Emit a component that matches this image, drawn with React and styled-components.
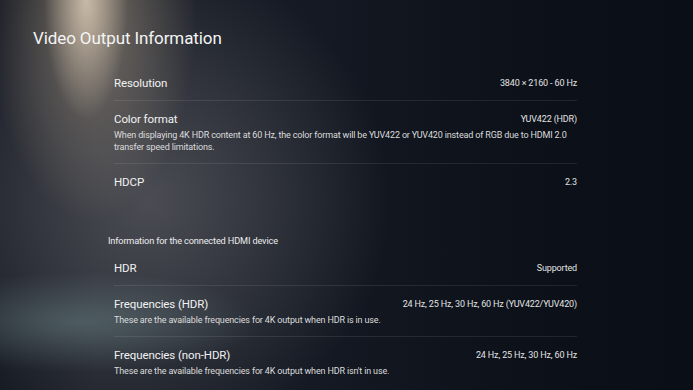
import React from "react";
import styled, { createGlobalStyle } from "styled-components";

const Global = createGlobalStyle`
  html, body {
    margin: 0;
    padding: 0;
    background: #0c111a;
  }
  * { box-sizing: border-box; }
`;

const Screen = styled.div`
  width: 693px;
  height: 390px;
  overflow: hidden;
  font-family: Roboto, "Noto Sans", sans-serif;
  color: #f2f2f2;
  background:
    radial-gradient(ellipse 42px 120px at 86px 0px, rgba(222, 206, 184, 0.8), rgba(222, 206, 184, 0) 100%),
    radial-gradient(ellipse 105px 210px at 92px 10px, rgba(170, 154, 132, 0.6), rgba(170, 154, 132, 0) 100%),
    radial-gradient(ellipse 180px 50px at 80px 322px, rgba(120, 148, 152, 0.42), rgba(120, 148, 152, 0) 100%),
    radial-gradient(ellipse 240px 240px at 150px 200px, rgba(88, 89, 95, 0.78), rgba(88, 89, 95, 0) 100%),
    linear-gradient(90deg, #171b24 0%, #1e222b 14%, #151a24 42%, #0d121b 70%, #0a0e16 100%);
`;

const Title = styled.h1`
  margin: 0;
  padding: 27px 0 0 33px;
  height: 65px;
  font-size: 17px;
  line-height: 22px;
  font-weight: 400;
  letter-spacing: -0.1px;
  color: #f4f4f4;
`;

const List = styled.div`
  margin-left: 114px;
  width: 463px;
`;

const Row = styled.div`
  padding: 10px 0 ${(p) => (p.$tall ? 10 : 9)}px;
  border-bottom: 1px solid ${(p) => (p.$last ? "transparent" : "rgba(255, 255, 255, 0.09)")};
`;

const Head = styled.div`
  display: flex;
  justify-content: space-between;
  align-items: center;
  height: 16px;
`;

const Label = styled.span`
  font-size: 11.5px;
  letter-spacing: -0.1px;
  color: #f2f2f2;
`;

const Value = styled.span`
  font-size: 9px;
  letter-spacing: -0.15px;
  color: #e2e2e2;
`;

const Desc = styled.p`
  margin: 2px 0 0;
  font-size: 9px;
  line-height: 12px;
  letter-spacing: -0.15px;
  color: #dcdcdc;
`;

const SectionTitle = styled.div`
  margin: 35px 0 3px -6px;
  font-size: 9.2px;
  line-height: 12px;
  letter-spacing: -0.15px;
  color: #ececec;
`;

function InfoRow({ label, value, desc, last }) {
  return (
    <Row $tall={!!desc} $last={last}>
      <Head>
        <Label>{label}</Label>
        <Value>{value}</Value>
      </Head>
      {desc && <Desc>{desc}</Desc>}
    </Row>
  );
}

export default function App() {
  return (
    <>
      <Global />
      <Screen>
        <Title>Video Output Information</Title>
        <List>
          <InfoRow label="Resolution" value="3840 × 2160 - 60 Hz" />
          <InfoRow
            label="Color format"
            value="YUV422 (HDR)"
            desc="When displaying 4K HDR content at 60 Hz, the color format will be YUV422 or YUV420 instead of RGB due to HDMI 2.0 transfer speed limitations."
          />
          <InfoRow label="HDCP" value="2.3" last />
          <SectionTitle>Information for the connected HDMI device</SectionTitle>
          <InfoRow label="HDR" value="Supported" />
          <InfoRow
            label="Frequencies (HDR)"
            value="24 Hz, 25 Hz, 30 Hz, 60 Hz (YUV422/YUV420)"
            desc="These are the available frequencies for 4K output when HDR is in use."
          />
          <InfoRow
            label="Frequencies (non-HDR)"
            value="24 Hz, 25 Hz, 30 Hz, 60 Hz"
            desc="These are the available frequencies for 4K output when HDR isn't in use."
            last
          />
        </List>
      </Screen>
    </>
  );
}
